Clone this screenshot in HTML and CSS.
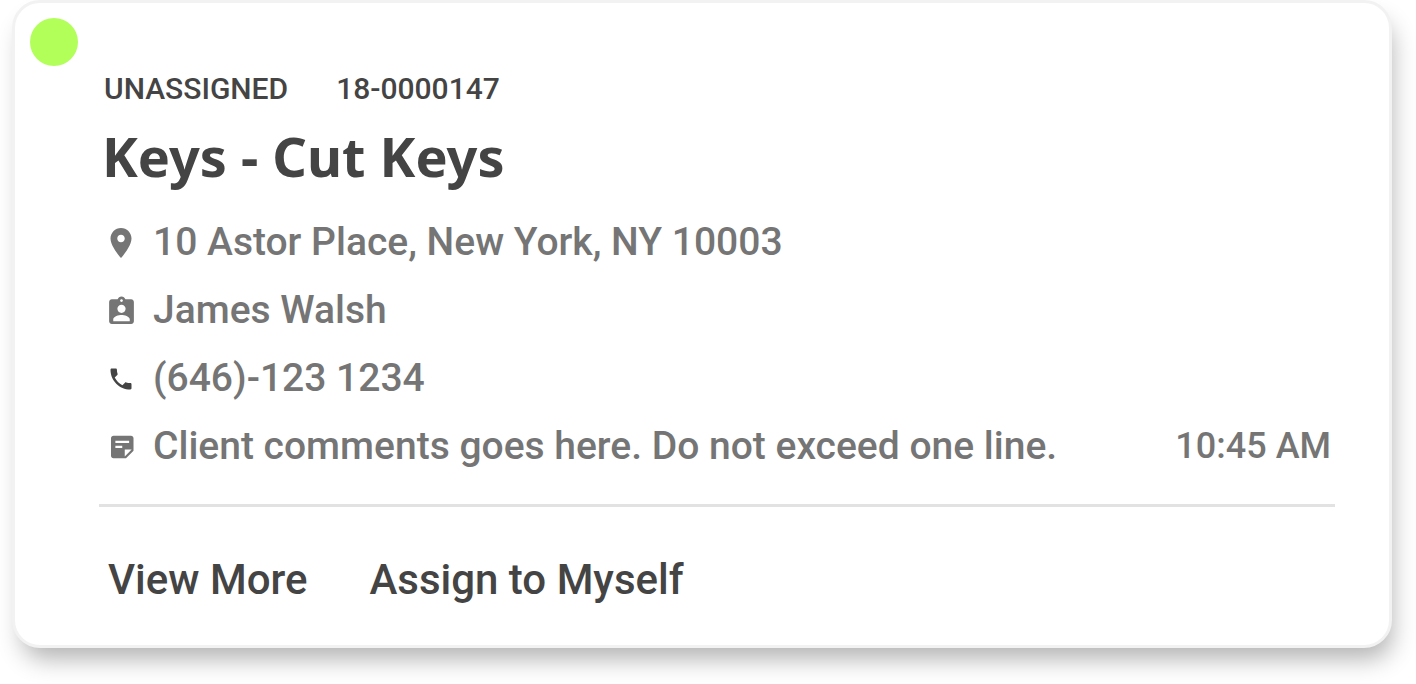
FILE: index.html
```html
<!DOCTYPE html>
<html lang="en">
<head>
    <meta charset="UTF-8">
    <meta name="viewport" content="width=device-width, initial-scale=1.0">
    <title>Work Order</title>
    <link rel="stylesheet" href="styles.css">
</head>
<body>
    <article class="card">
        <span class="status-dot"></span>

        <div class="card-body">
            <div class="meta">
                <span>UNASSIGNED</span>
                <span>18-0000147</span>
            </div>
            <h1 class="title">Keys - Cut Keys</h1>

            <ul class="details">
                <li>
                    <span class="icon">
                        <svg width="36" height="36" viewBox="0 0 24 24"><path d="M12 2C8.13 2 5 5.13 5 9c0 5.25 7 13 7 13s7-7.75 7-13c0-3.87-3.13-7-7-7zm0 9.5c-1.38 0-2.5-1.12-2.5-2.5s1.12-2.5 2.5-2.5 2.5 1.12 2.5 2.5-1.12 2.5-2.5 2.5z"/></svg>
                    </span>
                    <span>10 Astor Place, New York, NY 10003</span>
                </li>
                <li>
                    <span class="icon">
                        <svg width="33" height="33" viewBox="0 0 24 24"><path d="M19 3h-4.18C14.4 1.84 13.3 1 12 1c-1.3 0-2.4.84-2.82 2H5c-1.1 0-2 .9-2 2v14c0 1.1.9 2 2 2h14c1.1 0 2-.9 2-2V5c0-1.1-.9-2-2-2zm-7 0c.55 0 1 .45 1 1s-.45 1-1 1-1-.45-1-1 .45-1 1-1zm0 4c1.66 0 3 1.34 3 3s-1.34 3-3 3-3-1.34-3-3 1.34-3 3-3zm6 12H6v-1.4c0-2 4-3.1 6-3.1s6 1.1 6 3.1V19z"/></svg>
                    </span>
                    <span>James Walsh</span>
                </li>
                <li>
                    <span class="icon icon-dark">
                        <svg width="28" height="28" viewBox="0 0 24 24"><path d="M6.62 10.79c1.44 2.83 3.76 5.14 6.59 6.59l2.2-2.2c.27-.27.67-.36 1.02-.24 1.12.37 2.33.57 3.57.57.55 0 1 .45 1 1V20c0 .55-.45 1-1 1-9.39 0-17-7.61-17-17 0-.55.45-1 1-1h3.5c.55 0 1 .45 1 1 0 1.25.2 2.45.57 3.57.11.35.03.74-.25 1.02l-2.2 2.2z"/></svg>
                    </span>
                    <span>(646)-123 1234</span>
                </li>
                <li>
                    <span class="icon">
                        <svg width="30" height="30" viewBox="0 0 24 24"><path fill-rule="evenodd" d="M6 3h14c1.1 0 2 .9 2 2v10l-6 6H6c-1.1 0-2-.9-2-2V5c0-1.1.9-2 2-2zm1.500 4v1.700h11V7h-11zm0 4v1.700h5.500V11H7.500zm7.500 8.500l5.500-5.500H15v5.500z"/></svg>
                    </span>
                    <span>Client comments goes here. Do not exceed one line.</span>
                    <time class="time" datetime="10:45">10:45 AM</time>
                </li>
            </ul>

            <div class="actions">
                <button type="button">View More</button>
                <button type="button">Assign to Myself</button>
            </div>
        </div>
    </article>
</body>
</html>
```

FILE: styles.css
```css
* {
    box-sizing: border-box;
}
body {
    font-family: Roboto, sans-serif;
    font-weight: 500;
    margin: 0;
    padding: 0 24px 36px 12px;
    background: #fff;
    color: #444;
}
.card {
    display: flex;
    gap: 21px;
    padding: 15px 54px 41px 15px;
    background: #fff;
    border: 3px solid #f2f2f2;
    border-radius: 28px;
    box-shadow: 5px 16px 24px -5px rgba(0, 0, 0, 0.3);
}
.status-dot {
    flex: none;
    width: 48px;
    height: 48px;
    border-radius: 50%;
    background: #b2ff59;
}
.card-body {
    flex: 1;
    padding-top: 53px;
}
.meta {
    display: flex;
    gap: 48px;
    padding-left: 5px;
    font-size: 30px;
    line-height: 36px;
}
.title {
    margin: 13px 0 16px;
    padding-left: 3px;
    font-family: "Noto Sans", sans-serif;
    font-size: 54px;
    font-weight: 700;
    line-height: 72px;
}
.details {
    margin: 0;
    padding: 0 4px;
    list-style: none;
    color: #757575;
    font-size: 39px;
    line-height: 68px;
}
.details li {
    display: flex;
    align-items: center;
    gap: 14px;
}
.icon {
    display: flex;
    flex: none;
    justify-content: center;
    width: 36px;
    margin-top: 2px;
    fill: currentColor;
}
.icon-dark {
    color: #444;
}
.time {
    margin-left: auto;
    font-size: 36px;
}
.actions {
    display: flex;
    gap: 62px;
    margin-top: 24px;
    padding: 49px 9px 0;
    border-top: 3px solid #e2e2e2;
}
.actions button {
    padding: 0;
    border: 0;
    background: none;
    color: inherit;
    font: inherit;
    font-size: 42px;
    line-height: 48px;
    cursor: pointer;
}
```
